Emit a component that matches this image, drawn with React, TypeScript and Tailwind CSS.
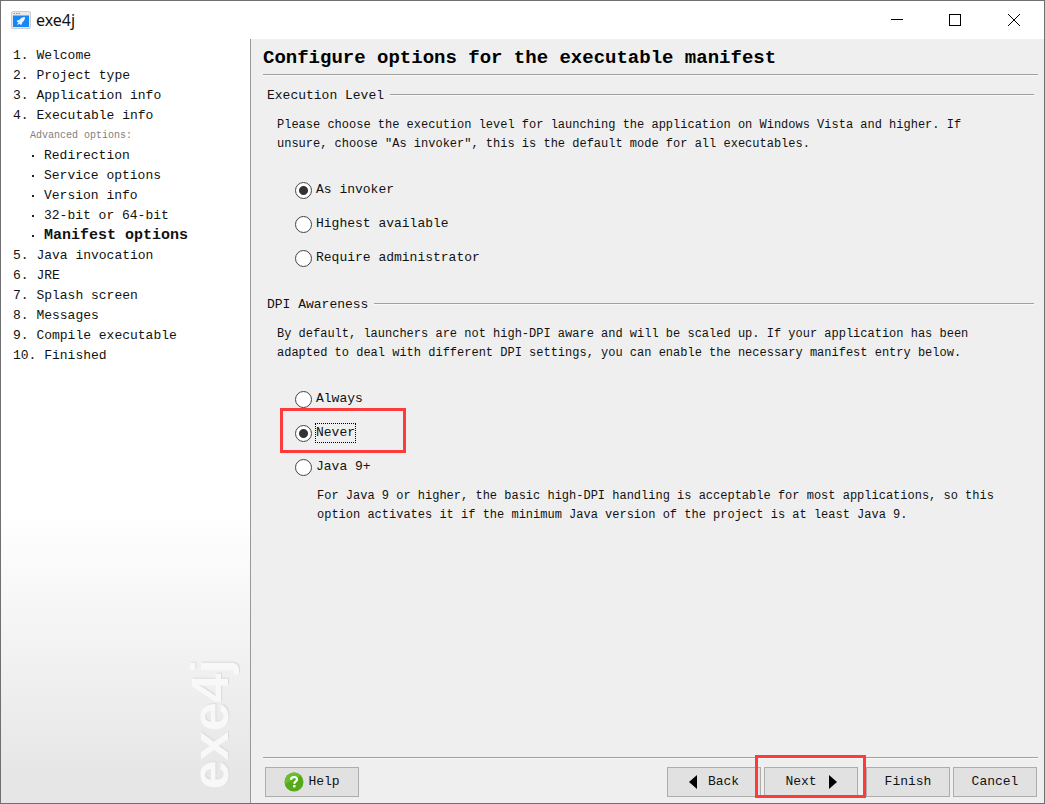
import { useState } from 'react';
import type { ReactNode } from 'react';

type Step = {
    label: string;
    children?: string[];
};

const STEPS: Step[] = [
    { label: 'Welcome' },
    { label: 'Project type' },
    { label: 'Application info' },
    {
        label: 'Executable info',
        children: [
            'Redirection',
            'Service options',
            'Version info',
            '32-bit or 64-bit',
            'Manifest options',
        ],
    },
    { label: 'Java invocation' },
    { label: 'JRE' },
    { label: 'Splash screen' },
    { label: 'Messages' },
    { label: 'Compile executable' },
    { label: 'Finished' },
];

const CURRENT = 'Manifest options';

const AppIcon = () => (
    <svg width="20" height="18" viewBox="0 0 20 18" aria-hidden="true">
        <rect x="0.5" y="0.5" width="19" height="17" rx="1.5" fill="#e9e9e9" stroke="#c9cdd0" />
        <path d="M2.500 2.500h1.500M5 2.500h1.500M7.500 2.500h1.500" stroke="#f0703d" strokeWidth="1.200" />
        <rect x="2" y="4.5" width="16" height="11.5" fill="#1787f5" />
        <path d="M14 6c-2.600 0-4.300 1-5.300 2.700L6.500 9.300 5.700 11l1.900-.2L6 14l3.200-1.600v1.900l1.600-1 .6-2C13.200 10 14 8.500 14 6z" fill="#eaf4ff" />
    </svg>
);

const HelpIcon = () => (
    <svg width="20" height="20" viewBox="0 0 20 20" aria-hidden="true">
        <circle cx="10" cy="10" r="9.500" fill="#55a91b" />
        <path d="M1 12A9.500 9.500 0 0 1 17 3.500z" fill="#6bbd2c" />
        <path d="M7 7.700C7 5.800 8.300 5 10 5s3 .9 3 2.500c0 2-2.700 2-2.700 4.200" fill="none" stroke="#fff" strokeWidth="2.200" />
        <rect x="9.100" y="13" width="2.400" height="2.400" fill="#fff" />
    </svg>
);

const TitleBar = () => (
    <header className="flex h-[38px] shrink-0 items-center bg-white pl-[10px]">
        <AppIcon />
        <h1 className="ml-[5px] flex-1 font-['Noto_Sans',sans-serif] text-[16px] leading-5">exe4j</h1>
        <button type="button" aria-label="Minimize" className="flex h-full w-[58px] items-center justify-center">
            <svg width="12" height="12" viewBox="0 0 12 12" stroke="#000">
                <path d="M0 5.500h12" />
            </svg>
        </button>
        <button type="button" aria-label="Maximize" className="flex h-full w-[58px] items-center justify-center">
            <svg width="12" height="12" viewBox="0 0 12 12" fill="none" stroke="#000">
                <rect x="0.5" y="0.5" width="11" height="11" />
            </svg>
        </button>
        <button type="button" aria-label="Close" className="flex h-full w-[60px] items-center justify-center">
            <svg width="12" height="12" viewBox="0 0 12 12" stroke="#000">
                <path d="M0 0l12 12M12 0L0 12" />
            </svg>
        </button>
    </header>
);

const Sidebar = () => (
    <aside className="flex w-[250px] shrink-0 flex-col justify-between border-r border-[#999999] bg-linear-to-b from-white from-62% to-[#e6e6e6] to-97% pt-[7px] pl-3">
        <ol className="text-[13px] leading-5">
            {STEPS.map((step, i) => (
                <li key={step.label}>
                    <span className="whitespace-pre">{`${i + 1}. ${step.label}`}</span>
                    {step.children && (
                        <div className="pl-[17px]">
                            <p className="text-[10px] leading-5 text-[#808080]">Advanced options:</p>
                            <ul>
                                {step.children.map((child) => (
                                    <li key={child} className="flex h-5 items-center">
                                        <span className="mr-[10px] ml-[2px] size-[2px] bg-[#222]" />
                                        {child === CURRENT ? (
                                            <strong className="text-[15px]" aria-current="step">{child}</strong>
                                        ) : (
                                            <span>{child}</span>
                                        )}
                                    </li>
                                ))}
                            </ul>
                        </div>
                    )}
                </li>
            ))}
        </ol>
        <div
            aria-hidden="true"
            className="mr-[14px] mb-[14px] rotate-180 self-end font-['Liberation_Sans',sans-serif] text-[52px] leading-[52px] font-bold text-[#f8f8f8] [text-shadow:1px_1px_1px_#dadada] [writing-mode:vertical-rl]"
        >
            exe4j
        </div>
    </aside>
);

const Group = ({ title, children }: { title: string; children: ReactNode }) => (
    <section className="px-1">
        <div className="flex h-5 items-center gap-[6px]">
            <h3 className="text-[13px] leading-5">{title}</h3>
            <div className="mb-[2px] h-[2px] flex-1 border-t border-[#a0a0a0] bg-[#fafafa]" />
        </div>
        {children}
    </section>
);

type RadioProps = {
    name: string;
    label: string;
    value: string;
    onChange: (value: string) => void;
    marked?: boolean;
};

const Radio = ({ name, label, value, onChange, marked }: RadioProps) => (
    <div className="relative flex h-[34px] items-center">
        <label className="flex items-center gap-1 text-[13px] leading-[18px]">
            <input
                type="radio"
                name={name}
                checked={value === label}
                onChange={() => onChange(label)}
                className="size-[17px] appearance-none rounded-full border border-[#444] bg-white checked:bg-[radial-gradient(circle,#333_4px,white_5px)]"
            />
            <span className={marked ? 'outline-1 outline-dotted outline-black' : ''}>{label}</span>
        </label>
        {marked && (
            <div className="pointer-events-none absolute -top-2 -left-[15px] h-[45px] w-[126px] border-3 border-[#ff3a3a]" />
        )}
    </div>
);

const WizardButton = ({ children, wide }: { children: ReactNode; wide?: boolean }) => (
    <button
        type="button"
        className={`flex h-[30px] items-center justify-center border border-[#adadad] bg-[#e1e1e1] text-[13px] leading-5 ${wide ? 'w-[94px]' : 'w-[84px]'}`}
    >
        {children}
    </button>
);

const App = () => {
    const [level, setLevel] = useState('As invoker');
    const [dpi, setDpi] = useState('Never');

    return (
        <div className="flex min-h-screen flex-col border border-[#707070] bg-[#efefef] font-['Liberation_Mono',monospace] text-[#111]">
            <TitleBar />
            <div className="flex flex-1">
                <Sidebar />
                <main className="flex min-w-0 flex-1 flex-col pr-[6px] pl-3">
                    <h2 className="h-[35px] pt-[7px] text-[19px] leading-6 font-bold text-black">
                        Configure options for the executable manifest
                    </h2>
                    <div className="h-[2px] border-t border-[#a0a0a0] bg-[#fafafa]" />

                    <div className="flex-1 pt-[10px]">
                        <Group title="Execution Level">
                            <p className="mt-[10px] pl-[10px] text-[12px] leading-[19px]">
                                Please choose the execution level for launching the application on Windows Vista and higher. If
                                <br />
                                unsure, choose "As invoker", this is the default mode for all executables.
                            </p>
                            <div className="mt-[19px] pl-7" role="radiogroup" aria-label="Execution Level">
                                <Radio name="level" label="As invoker" value={level} onChange={setLevel} />
                                <Radio name="level" label="Highest available" value={level} onChange={setLevel} />
                                <Radio name="level" label="Require administrator" value={level} onChange={setLevel} />
                            </div>
                        </Group>

                        <div className="mt-5">
                            <Group title="DPI Awareness">
                                <p className="mt-[10px] pl-[10px] text-[12px] leading-[19px]">
                                    By default, launchers are not high-DPI aware and will be scaled up. If your application has been
                                    <br />
                                    adapted to deal with different DPI settings, you can enable the necessary manifest entry below.
                                </p>
                                <div className="mt-[19px] pl-7" role="radiogroup" aria-label="DPI Awareness">
                                    <Radio name="dpi" label="Always" value={dpi} onChange={setDpi} />
                                    <Radio name="dpi" label="Never" value={dpi} onChange={setDpi} marked />
                                    <Radio name="dpi" label="Java 9+" value={dpi} onChange={setDpi} />
                                </div>
                                <p className="mt-[3px] pl-[50px] text-[12px] leading-[19px]">
                                    For Java 9 or higher, the basic high-DPI handling is acceptable for most applications, so this
                                    <br />
                                    option activates it if the minimum Java version of the project is at least Java 9.
                                </p>
                            </Group>
                        </div>
                    </div>

                    <div className="h-[2px] border-t border-[#a0a0a0] bg-[#fafafa]" />
                    <footer className="flex items-center gap-[3px] pt-2 pr-[1px] pb-[6px] pl-[2px]">
                        <WizardButton wide>
                            <HelpIcon />
                            <span className="ml-1">Help</span>
                        </WizardButton>
                        <div className="flex-1" />
                        <WizardButton wide>
                            <svg width="8" height="14" viewBox="0 0 8 14" aria-hidden="true">
                                <path d="M8 0v14L0 7z" />
                            </svg>
                            <span className="ml-[11px]">Back</span>
                        </WizardButton>
                        <div className="relative mr-[5px]">
                            <WizardButton wide>
                                <span className="mr-3">Next</span>
                                <svg width="8" height="14" viewBox="0 0 8 14" aria-hidden="true">
                                    <path d="M0 0v14l8-7z" />
                                </svg>
                            </WizardButton>
                            <div className="pointer-events-none absolute -top-3 -left-[9px] h-[43px] w-[111px] border-3 border-[#ff3a3a]" />
                        </div>
                        <WizardButton>Finish</WizardButton>
                        <WizardButton>Cancel</WizardButton>
                    </footer>
                </main>
            </div>
        </div>
    );
};

export default App;
